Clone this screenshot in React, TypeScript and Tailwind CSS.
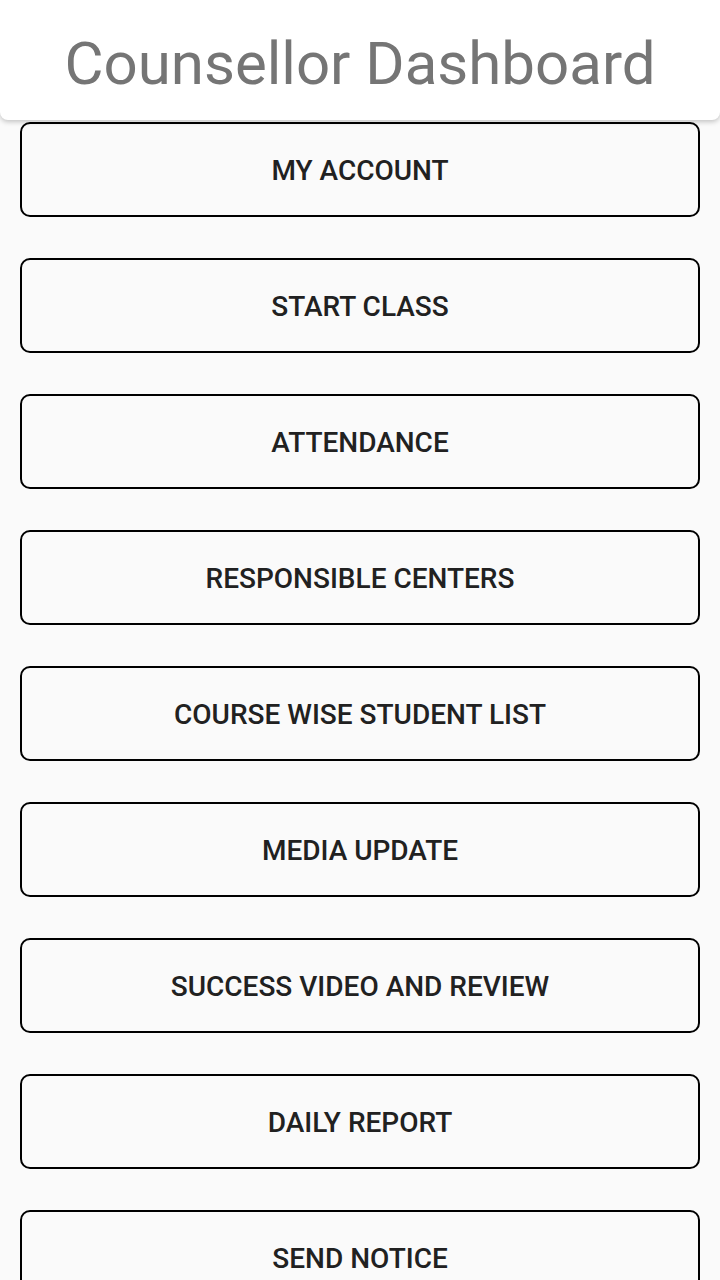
import React from "react";

const items = [
  "MY ACCOUNT",
  "START CLASS",
  "ATTENDANCE",
  "RESPONSIBLE CENTERS",
  "COURSE WISE STUDENT LIST",
  "MEDIA UPDATE",
  "SUCCESS VIDEO AND REVIEW",
  "DAILY REPORT",
  "SEND NOTICE",
];

const App = () => {
  return (
    <div className="h-[1280px] overflow-hidden bg-[#fafafa] font-['Roboto',sans-serif]">
      <header className="relative z-10 flex h-[120px] items-center justify-center rounded-b-lg bg-white shadow-[0_2px_5px_rgba(0,0,0,0.22)]">
        <h1 className="pt-[8px] text-[60px] leading-none text-[#757575]">
          Counsellor Dashboard
        </h1>
      </header>
      <div className="flex flex-col gap-[41px] px-5 pt-[2px]">
        {items.map((label) => (
          <button
            key={label}
            className="flex h-[95px] w-full items-center justify-center rounded-[10px] border-2 border-black bg-[#fafafa] pt-[3px] text-[28px] font-medium text-[#212121]"
          >
            {label}
          </button>
        ))}
      </div>
    </div>
  );
};

export default App;
